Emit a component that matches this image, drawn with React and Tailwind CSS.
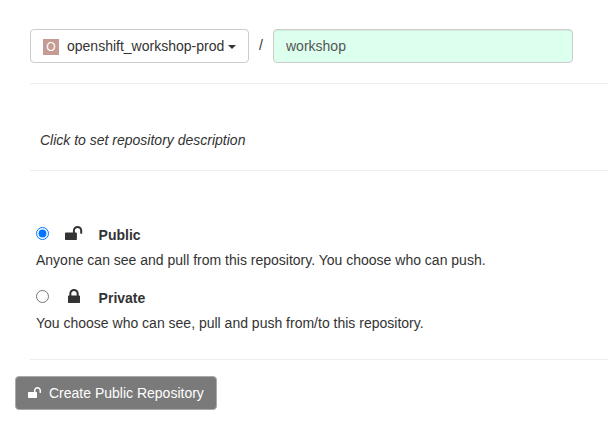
import React, { useState } from 'react';

function UnlockIcon({ className }) {
  return (
    <svg viewBox="64 128 1664 1408" preserveAspectRatio="none" fill="currentColor" className={className} aria-hidden="true">
      <path d="M1728 576v256q0 26-19 45t-45 19h-64q-26 0-45-19t-19-45v-256q0-106-75-181t-181-75-181 75-75 181v192h96q40 0 68 28t28 68v576q0 40-28 68t-68 28h-960q-40 0-68-28t-28-68v-576q0-40 28-68t68-28h672v-192q0-185 131.5-316.5t316.5-131.5 316.5 131.5 131.5 316.5z" />
    </svg>
  );
}

function LockIcon({ className }) {
  return (
    <svg viewBox="320 128 1152 1408" preserveAspectRatio="none" fill="currentColor" className={className} aria-hidden="true">
      <path d="M640 768h512v-192q0-106-75-181t-181-75-181 75-75 181v192zm832 96v576q0 40-28 68t-68 28h-960q-40 0-68-28t-28-68v-576q0-40 28-68t68-28h32v-192q0-184 132-316t316-132 316 132 132 316v192h32q40 0 68 28t28 68z" />
    </svg>
  );
}

function VisibilityOption({ value, title, description, icon, checked, onSelect }) {
  return (
    <div className="h-[63px] pl-1.5">
      <label className="flex h-5">
        <input
          type="radio"
          name="visibility"
          value={value}
          checked={checked}
          onChange={onSelect}
          className="mt-[3px] h-[13px] w-[13px] shrink-0"
        />
        <span className="ml-[14px] flex w-[22px] shrink-0 justify-center pt-[1.7px]">{icon}</span>
        <span className="ml-[13.6px] mt-px font-bold">{title}</span>
      </label>
      <div className="mt-[6px] whitespace-nowrap">{description}</div>
    </div>
  );
}

export default function App() {
  const [visibility, setVisibility] = useState('public');
  const [name, setName] = useState('workshop');

  return (
    <main className="h-[438px] overflow-hidden bg-white pt-[29px] font-['Liberation_Sans',Arial,sans-serif] text-[14px] leading-5 text-[#333]">
      <div className="ml-[30px]">
        <div className="flex h-[55px] items-start border-b border-[#eee]">
          <button className="flex h-[34px] w-[219px] items-center rounded border border-[#ccc] bg-white pl-3">
            <span className="mt-px flex h-4 w-4 items-center justify-center bg-[#c49c94] text-[12px] leading-4 text-white">O</span>
            <span className="ml-2 whitespace-nowrap">openshift_workshop-prod</span>
            <span className="ml-1 mt-px border-x-4 border-t-4 border-x-transparent border-t-[#333]" />
          </button>
          <span className="w-6 pt-[6px] text-center">/</span>
          <input
            value={name}
            onChange={(e) => setName(e.target.value)}
            aria-label="Repository name"
            className="h-[34px] w-[300px] rounded border border-[#ccc] bg-[#dfe] px-3 text-[#555] shadow-[inset_0_1px_1px_rgba(0,0,0,0.075)] outline-none"
          />
        </div>
        <div className="h-[87px] border-b border-[#eee] pl-[10px] pt-[46px] italic">
          Click to set repository description
        </div>
        <div className="h-[189px] border-b border-[#eee] pt-[53px]">
          <VisibilityOption
            value="public"
            title="Public"
            description="Anyone can see and pull from this repository. You choose who can push."
            icon={<UnlockIcon className="h-[14.3px] w-[17.2px]" />}
            checked={visibility === 'public'}
            onSelect={() => setVisibility('public')}
          />
          <VisibilityOption
            value="private"
            title="Private"
            description="You choose who can see, pull and push from/to this repository."
            icon={<LockIcon className="h-[14.3px] w-[12px]" />}
            checked={visibility === 'private'}
            onSelect={() => setVisibility('private')}
          />
        </div>
      </div>
      <button className="ml-[15px] mt-4 flex h-[34px] w-[202px] items-center rounded border border-[#aaa] bg-[#7a7a7a] pl-3 text-white">
        <UnlockIcon className="mb-px h-[11px] w-[13px]" />
        <span className="ml-2 whitespace-nowrap">Create Public Repository</span>
      </button>
    </main>
  );
}
